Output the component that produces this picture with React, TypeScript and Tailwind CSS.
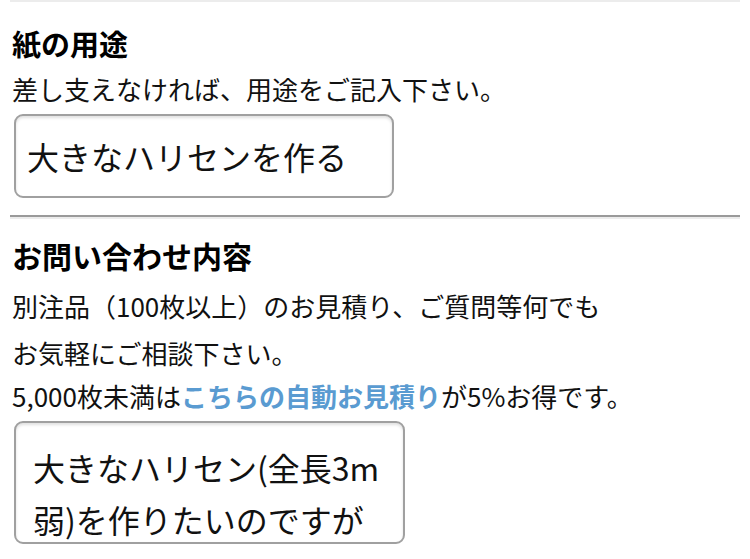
import React from 'react'

const font = { fontFamily: '"Noto Sans CJK JP", "Noto Sans", sans-serif' }

const Divider: React.FC = () => (
  <div className="mx-[10px]">
    <div className="h-[2px] bg-[#9a9a9a]" />
    <div className="h-[2px] bg-[#ececec]" />
  </div>
)

const FieldBox: React.FC<{ className?: string; children: React.ReactNode }> = ({
  className = '',
  children,
}) => (
  <div
    className={`border-2 border-[#a0a0a0] rounded-[9px] bg-white shadow-[inset_0_2px_3px_rgba(0,0,0,0.12)] text-[32px] text-[#111] ${className}`}
  >
    {children}
  </div>
)

export default function App() {
  return (
    <div className="w-[750px] h-[559px] bg-white overflow-hidden" style={font}>
      {/* tail of previous divider */}
      <div className="mx-[10px] h-[2px] bg-[#ececec]" />

      {/* 紙の用途 */}
      <section className="px-[12px]">
        <h2 className="mt-[22px] text-[29px] leading-[38px] font-bold text-black">
          紙の用途
        </h2>
        <p className="mt-[8px] text-[26px] leading-[38px] text-[#111]">
          差し支えなければ、用途をご記入下さい。
        </p>
        <FieldBox className="mt-[6px] ml-[2px] w-[380px] h-[84px] pl-[11px] flex items-center leading-none">
          大きなハリセンを作る
        </FieldBox>
      </section>

      <div className="h-[17px]" />
      <Divider />

      {/* お問い合わせ内容 */}
      <section className="px-[12px]">
        <h2 className="mt-[17px] text-[30px] leading-[38px] font-bold text-black">
          お問い合わせ内容
        </h2>
        <div className="mt-[8px] text-[26px] leading-[47px] text-[#111]">
          <p>別注品（100枚以上）のお見積り、ご質問等何でも</p>
          <p>お気軽にご相談下さい。</p>
          <p className="-mt-[4px]">
            5,000枚未満は
            <a className="text-[#5a9bd1] font-bold">こちらの自動お見積り</a>
            が5%お得です。
          </p>
        </div>
        <FieldBox className="mt-[2px] ml-[2px] w-[391px] h-[123px] pl-[17px] pt-[18px] leading-[52px]">
          大きなハリセン(全長3m
          <br />
          弱)を作りたいのですが
        </FieldBox>
      </section>
    </div>
  )
}
